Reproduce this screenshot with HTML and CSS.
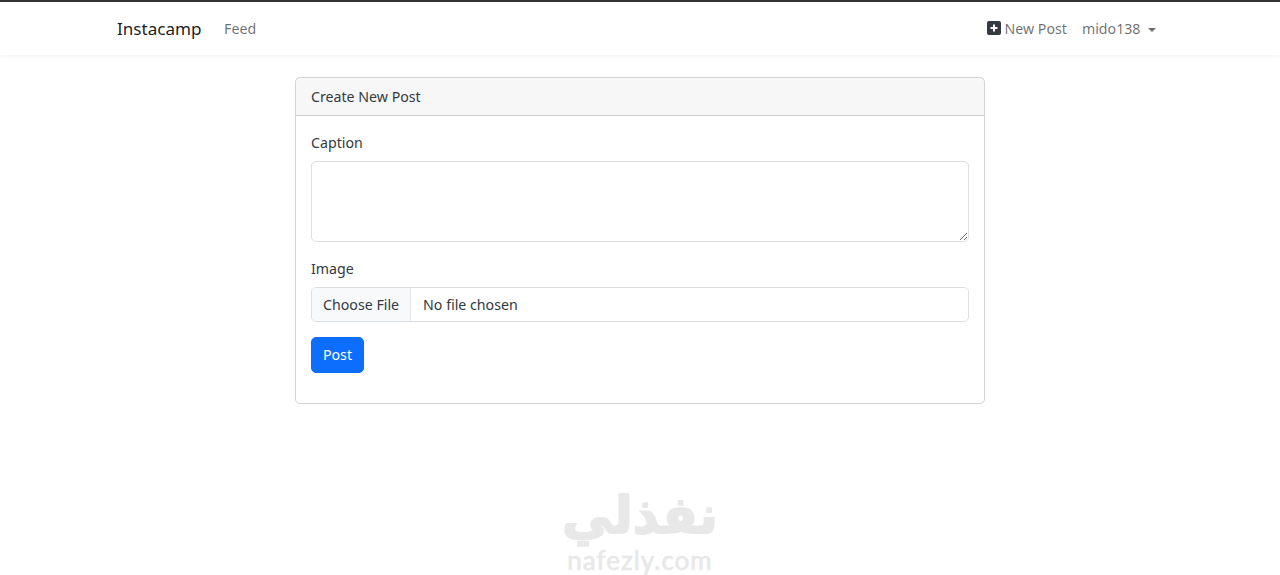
FILE: index.html
```html
<!DOCTYPE html>
<html lang="en">
<head>
    <meta charset="UTF-8">
    <meta name="viewport" content="width=device-width, initial-scale=1.0">
    <title>Instacamp</title>
    <link rel="stylesheet" href="styles.css">
</head>
<body>
    <nav class="navbar">
        <div class="navbar-inner">
            <a class="brand" href="#">Instacamp</a>
            <a class="nav-link" href="#">Feed</a>
            <div class="nav-right">
                <a class="nav-link" href="#">
                    <svg class="plus-icon" viewBox="0 0 14 14" width="14" height="14">
                        <rect width="14" height="14" rx="2" fill="#343a40"/>
                        <path d="M7 3.5v7M3.5 7h7" stroke="#fff" stroke-width="2" fill="none"/>
                    </svg>
                    New Post
                </a>
                <a class="nav-link" href="#">mido138<span class="caret"></span></a>
            </div>
        </div>
    </nav>

    <main class="card">
        <div class="card-header">Create New Post</div>
        <form class="card-body">
            <label class="form-label" for="caption">Caption</label>
            <textarea class="form-control caption-box" id="caption"></textarea>

            <label class="form-label image-label" for="image">Image</label>
            <input class="form-control file-input" id="image" type="file">

            <button class="btn-post" type="button">Post</button>
        </form>
    </main>

    <div class="watermark">
        <div class="watermark-ar" lang="ar" dir="rtl">نفذلي</div>
        <div class="watermark-en">nafezly.com</div>
    </div>
</body>
</html>
```

FILE: styles.css
```css
* {
    box-sizing: border-box;
}
html, body {
    height: 100%;
}
body {
    margin: 0;
    font-family: "Noto Sans", "Open Sans", sans-serif;
    font-size: 14.2px;
    line-height: 22.5px;
    color: #343a40;
    background-color: #fff;
    overflow: hidden;
}
a {
    text-decoration: none;
}
.navbar {
    height: 55px;
    border-top: 2px solid #343434;
    box-shadow: 0 1px 4px rgba(0, 0, 0, 0.07);
}
.navbar-inner {
    width: 1070px;
    height: 53px;
    margin: 0 auto;
    padding: 2px 12px 0;
    display: flex;
    align-items: center;
}
.brand {
    font-size: 17.1px;
    color: rgba(0, 0, 0, 0.9);
    margin-right: 15px;
}
.nav-link {
    color: rgba(0, 0, 0, 0.58);
    padding: 0 7.5px;
    display: flex;
    align-items: center;
}
.nav-right {
    margin-left: auto;
    display: flex;
}
.plus-icon {
    margin-right: 3px;
    margin-bottom: 3px;
}
.caret {
    display: inline-block;
    margin-left: 7px;
    border-top: 4.5px solid;
    border-right: 4.5px solid transparent;
    border-left: 4.5px solid transparent;
}
.card {
    width: 690px;
    height: 327px;
    margin: 22px auto 0;
    border: 1px solid rgba(0, 0, 0, 0.17);
    border-radius: 5px;
}
.card-header {
    height: 38px;
    padding: 8px 15px 0;
    background-color: rgba(0, 0, 0, 0.03);
    border-bottom: 1px solid rgba(0, 0, 0, 0.17);
    border-radius: 4px 4px 0 0;
}
.card-body {
    padding: 15px;
}
.form-label {
    display: block;
    padding-top: 1px;
    margin-bottom: 6px;
}
.image-label {
    margin-bottom: 7px;
}
.form-control {
    display: block;
    width: 100%;
    font-family: inherit;
    font-size: 14.2px;
    color: #343a40;
    background-color: #fff;
    border: 1px solid #dcdfe3;
    border-radius: 5px;
}
.caption-box {
    height: 81px;
    margin-bottom: 15px;
    padding: 6px 11px;
}
.file-input {
    height: 35px;
    margin-bottom: 15px;
    padding: 0 11px 0 0;
    line-height: 33px;
    overflow: hidden;
}
.file-input::file-selector-button {
    height: 33px;
    margin-right: 12px;
    padding: 0 11px;
    font-family: inherit;
    font-size: 14.2px;
    color: #343a40;
    background-color: #f8f9fa;
    border: 0;
    border-right: 1px solid #e3e6e9;
    border-radius: 0;
}
.btn-post {
    display: block;
    width: 53px;
    height: 36px;
    padding: 0 0 2px;
    font-family: inherit;
    font-size: 14.2px;
    color: #fff;
    background-color: #0d6efd;
    border: 1px solid #0d6efd;
    border-radius: 5px;
}
/* stamp from the source site, sits over the page */
.watermark {
    position: absolute;
    left: 540px;
    top: 485px;
    width: 200px;
    text-align: center;
    color: #e8e8e8;
}
.watermark-ar {
    font-family: "DejaVu Sans", sans-serif;
    font-size: 51px;
    font-weight: bold;
    line-height: 62px;
    -webkit-text-stroke: 2px #e8e8e8;
}
.watermark-en {
    font-family: "Lato", sans-serif;
    font-size: 26px;
    line-height: 26px;
    letter-spacing: 1px;
    -webkit-text-stroke: 0.6px #e8e8e8;
}
```
